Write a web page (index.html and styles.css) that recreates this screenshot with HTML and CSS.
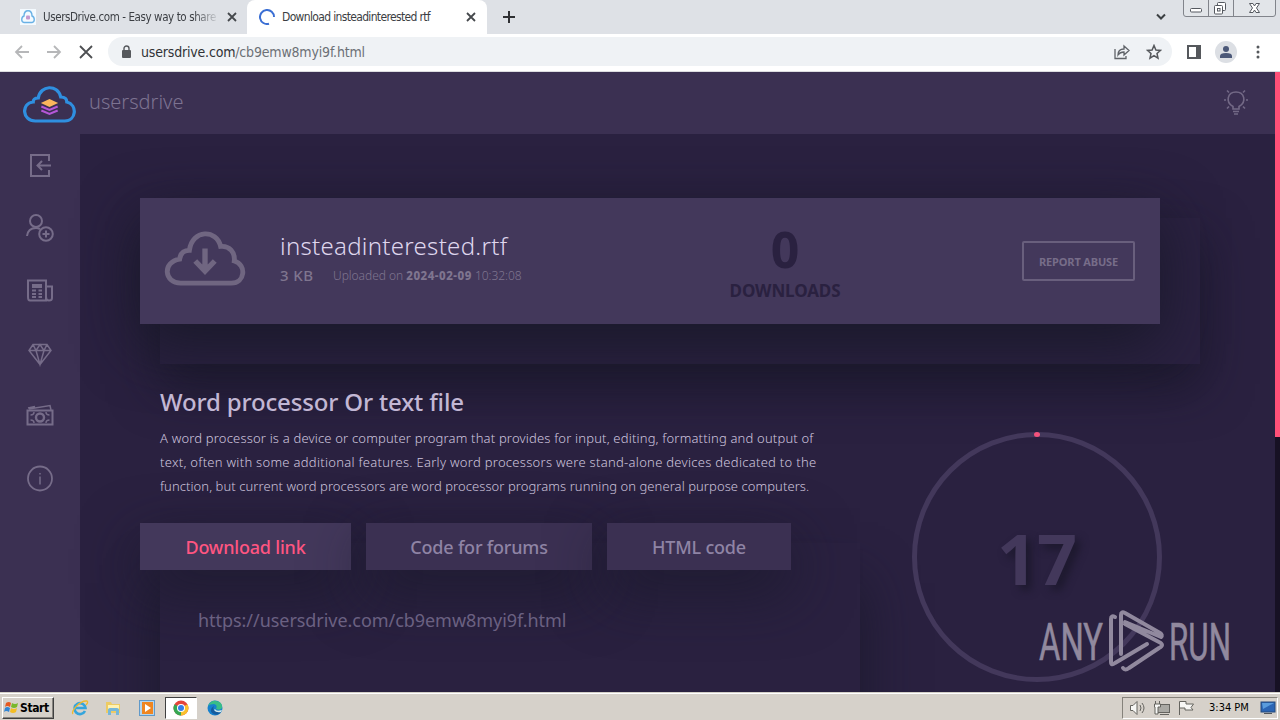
FILE: index.html
```html
<!DOCTYPE html>
<html lang="en">
<head>
    <meta charset="UTF-8">
    <meta name="viewport" content="width=device-width, initial-scale=1.0">
    <title>Download insteadinterested rtf</title>
    <link rel="stylesheet" href="styles.css">
</head>
<body>

<div class="tabstrip">
    <div class="tab">
        <svg class="favicon" width="16" height="16" viewBox="0 0 16 16"><rect width="16" height="16" fill="#f4faff"/><path d="M4 13.500C1 13 1 8 4 7C4 0 12 0 12 7C15 8 15 13 12 13.500Z" fill="none" stroke="#69b1e5" stroke-width="1.400"/><rect x="6" y="6.500" width="4" height="4" rx="1" fill="#c69ad0"/></svg>
        <span class="tab-title faded">UsersDrive.com - Easy way to share</span>
        <svg class="close" width="10" height="10" viewBox="0 0 10 10"><path d="M1 1L9 9M9 1L1 9"/></svg>
    </div>
    <div class="tab active">
        <svg class="favicon" width="16" height="16" viewBox="0 0 16 16"><path d="M10 14.700A7 7 0 1 1 15 8" fill="none" stroke="#3b6fd4" stroke-width="2"/></svg>
        <span class="tab-title">Download insteadinterested rtf</span>
        <svg class="close" width="10" height="10" viewBox="0 0 10 10"><path d="M1 1L9 9M9 1L1 9"/></svg>
    </div>
    <svg class="new-tab" width="12" height="12" viewBox="0 0 12 12"><path d="M6 0V12M0 6H12" stroke="#2f3033" stroke-width="2"/></svg>
    <svg class="tab-search" width="10" height="8" viewBox="0 0 10 8"><path d="M1 1.500L5 5.500L9 1.500" fill="none" stroke="#3c4043" stroke-width="2"/></svg>
    <svg class="window-buttons" width="93" height="18" viewBox="0 0 93 18">
        <path d="M.5 0V14Q.5 16.500 3 16.500H90Q92.500 16.500 92.500 14V0M25.500 0V16M50.500 0V16" fill="#e2e5e9" stroke="#81848b"/>
        <g fill="#fff" stroke="#555960"><rect x="7.500" y="8.500" width="11" height="3.500" rx="1"/><rect x="34.500" y="2.500" width="8" height="8" rx="1"/><rect x="31.500" y="5.500" width="8" height="8.500" rx="1"/><rect x="34.500" y="8.500" width="2.500" height="2.500"/><path d="M66.500 3.500H70L71.500 6L73 3.500H76.500L73.500 8L76.500 12.500H73L71.500 10L70 12.500H66.500L69.500 8Z"/></g>
    </svg>
</div>

<div class="toolbar">
    <svg class="nav" width="92" height="16" viewBox="0 0 92 16" fill="none" stroke-width="1.800">
        <path d="M15 8H2M8 2L2 8L8 14M33 8H46M40 2L46 8L40 14" stroke="#b6b7b9"/>
        <path d="M66 2L78 14M78 2L66 14" stroke="#4d4f52"/>
    </svg>
    <div class="address">
        <svg width="10" height="14" viewBox="0 0 10 14"><rect y="5" width="9" height="8" rx="1" fill="#56595d"/><path d="M2 6V3.500A2.500 2.500 0 0 1 7 3.500V6" fill="none" stroke="#56595d" stroke-width="1.400"/></svg>
        <span class="url">usersdrive.com<span>/cb9emw8myi9f.html</span></span>
        <svg class="share" width="16" height="16" viewBox="0 0 16 16" fill="none" stroke="#5f6368" stroke-width="1.300"><path d="M1 5V14.500H12V12"/><path d="M4 11Q4 5 10 5V2L15 6.500L10 11V8Q6 8 4 11Z"/></svg>
        <svg class="star" width="16" height="16" viewBox="0 0 16 16"><path d="M8 1.500L9.900 6L14.500 6.400L11 9.500L12 14.200L8 11.700L4 14.200L5 9.500L1.500 6.400L6.100 6Z" fill="none" stroke="#55585c" stroke-width="1.500"/></svg>
    </div>
    <svg class="side-panel" width="14" height="14" viewBox="0 0 14 14"><rect x="1" y="1" width="12" height="12" fill="none" stroke="#55585c" stroke-width="2"/><rect x="9" width="5" height="14" fill="#55585c"/></svg>
    <svg class="profile" width="22" height="22" viewBox="0 0 22 22"><circle cx="11" cy="11" r="11" fill="#dcdfe4"/><circle cx="11" cy="8" r="3" fill="#4b5878"/><path d="M5 17V15Q5 12 11 12Q17 12 17 15V17Z" fill="#4b5878"/></svg>
    <svg class="menu" width="4" height="14" viewBox="0 0 4 14" fill="#55585c"><circle cx="2" cy="2" r="1.500"/><circle cx="2" cy="7" r="1.500"/><circle cx="2" cy="12" r="1.500"/></svg>
</div>

<div class="viewport">
    <div class="site">
        <header class="header">
            <svg class="logo" width="53" height="37" viewBox="0 0 52 37" preserveAspectRatio="none">
                <path d="M12 35C-1 35-2 17 10 16C10 13 12 12 15 12C17-1 34-2 37 11C40 11 43 12 43 16C54 19 52 35 41 35Z" fill="none" stroke="#2f8fe0" stroke-width="3.200"/>
                <path d="M17.500 17L26 13L34.500 17L26 21Z" fill="#fbb65c"/>
                <path d="M18 20.500L26 24L34 20.500M18 24.500L26 28L34 24.500" fill="none" stroke="#b557d8" stroke-width="2"/>
            </svg>
            <span class="brand">usersdrive</span>
            <svg class="bulb" width="24" height="26" viewBox="0 0 24 26" fill="none" stroke="#736986" stroke-width="1.600"><path d="M9 20V17.500C1 13 3.500 3 12 3C20.500 3 23 13 15 17.500V20ZM9 22.500H15M10 25H14"/><path d="M3 1.500L5 3.500M21 1.500L19 3.500M0 11H2M22 11H24M3 19.500L5 17.500M21 19.500L19 17.500"/></svg>
        </header>
        <div class="body">
            <nav class="sidebar">
                <a><svg viewBox="0 0 28 28"><path d="M23 10V4H5V25H23V19M25 14.500H12M16 10L11.500 14.500L16 19"/></svg></a>
                <a><svg viewBox="0 0 28 28"><circle cx="10" cy="7" r="6"/><path d="M1 22Q2 14 10 14Q12 14 14 15"/><circle cx="20" cy="20" r="6.800"/><path d="M20 16.500V23.500M16.500 20H23.500"/></svg></a>
                <a><svg viewBox="0 0 28 28"><path d="M2 4.500H20V24.500H4Q2 24.500 2 21ZM20 10.500H26V22Q26 24.500 23 24.500Q20 24.500 20 21"/><path d="M6 10H16" stroke-width="4"/><path d="M6 14.500H10M12.500 14.500H16M6 18H10M12.500 18H16M6 21H10M12.500 21H16"/></svg></a>
                <a><svg viewBox="0 0 28 28" class="thin"><path d="M7 5.500H21L25 11.500L14 25.500L3 11.500ZM3 11.500H25M7 5.500L10 11.500L14 25.500L18 11.500L21 5.500M10 11.500L14 5.500L18 11.500"/></svg></a>
                <a><svg viewBox="0 0 28 28" class="thin"><path d="M1.500 8.500H26.500V22.500H1.500Z" stroke-width="2"/><path d="M3 7L24 3.500L25 8M2 6L9 4.500M4.500 13Q8 13 8 10M20 10Q20 13 23.500 13M4.500 18Q8 18 8 21M20 21Q20 18 23.500 18"/><circle cx="14" cy="15.500" r="4" stroke-width="2.400"/></svg></a>
                <a><svg viewBox="0 0 28 28" class="thin"><circle cx="14" cy="14.500" r="12" stroke-width="1.800"/><path d="M14 12.500V20.500M14 9V10.500"/></svg></a>
            </nav>
            <main class="content">
                <section class="panel">
                    <div class="file-card">
                        <svg class="cloud" width="82" height="58" viewBox="-1 -1 84 60" preserveAspectRatio="none" fill="none" stroke="#706681">
                            <path d="M16 53C-1 53-3 31 15 28C16 21 20 19 25 19C28-3 53-3 57 15C66 14 72 21 71 30C84 34 82 53 68 53Z" stroke-width="5"/>
                            <path d="M41 17V39M31 30L41 40.500L51 30" stroke-width="5.500"/>
                        </svg>
                        <div class="file-info">
                            <h1>insteadinterested.rtf</h1>
                            <p><span class="size">3 KB</span><span class="uploaded">Uploaded on <b>2024-02-09</b> 10:32:08</span></p>
                        </div>
                        <div class="downloads">
                            <strong>0</strong>
                            <span>DOWNLOADS</span>
                        </div>
                        <button class="report">REPORT ABUSE</button>
                    </div>
                </section>
                <div class="columns">
                    <div class="details">
                        <h2>Word processor Or text file</h2>
                        <p><span class="l1">A word processor is a device or computer program that provides for input, editing, formatting and output of</span><br><span class="l2">text, often with some additional features. Early word processors were stand-alone devices dedicated to the</span><br><span class="l3">function, but current word processors are word processor programs running on general purpose computers.</span></p>
                        <div class="link-box">
                            <div class="link-tabs">
                                <button class="current">Download link</button>
                                <button class="forums">Code for forums</button>
                                <button class="html-code">HTML code</button>
                            </div>
                            <div class="link">https://usersdrive.com/cb9emw8myi9f.html</div>
                        </div>
                    </div>
                    <div class="countdown">17</div>
                </div>
            </main>
        </div>
    </div>
    <div class="scrollbar"></div>
    <svg class="watermark" width="200" height="72" viewBox="0 0 200 72">
        <text x="2" y="51" textLength="64" lengthAdjust="spacingAndGlyphs">ANY</text>
        <text x="132" y="51" textLength="62" lengthAdjust="spacingAndGlyphs">RUN</text>
        <path d="M78 8Q74 6 74 10V53Q74 57 78 54L110 35M84 45V6Q84 2 88 4L123 24Q126 26 124 28L88 13M86 59Q88 62 92 59L122 39Q128 36 122 33L88 15"/>
    </svg>
</div>

<footer class="taskbar">
    <button class="start"><svg width="17" height="16" viewBox="0 0 17 16"><path d="M3 3Q6 1 8 3L7 7Q4 5 2 7Z" fill="#e65a22"/><path d="M9 3Q12 5 15 3L14 7Q11 9 8 7Z" fill="#78b82c"/><path d="M2 8Q4 6 7 8L6 12Q3 10 1 12Z" fill="#3285d4"/><path d="M8 8Q11 10 14 8L13 12Q10 14 7 12Z" fill="#f4bd24"/></svg>Start</button>
    <svg class="ie" width="18" height="18" viewBox="0 0 18 18"><path d="M14 12A5.500 5.500 0 1 1 14.500 9H5" fill="none" stroke="#35a5dc" stroke-width="2.600"/><path d="M2 15C-1 13 9 1 16 2C17.500 3 16 5 15 6" fill="none" stroke="#efb92d" stroke-width="1.400"/></svg>
    <svg class="folder" width="16" height="16" viewBox="0 0 16 16"><path d="M1 2H6L7 4H15V13H1Z" fill="#edcb64"/><path d="M3 5H14V9H3Z" fill="#fff2b2"/><path d="M3 15V10Q3 8 5 8H12Q14 8 14 10V15H11V11H6V15Z" fill="#76b7d9"/></svg>
    <svg class="player" width="16" height="16" viewBox="0 0 16 16"><rect x=".5" y=".5" width="15" height="15" fill="#b4d5ed" stroke="#6099c9"/><rect x="3" y="2" width="11" height="12" fill="#ef8621"/><path d="M6 4L12 8L6 12Z" fill="#fff"/></svg>
    <div class="task-active"><svg width="16" height="16" viewBox="0 0 16 16"><circle cx="8" cy="8" r="7.500" fill="#e4443a"/><path d="M8 8L1.500 4.200A7.500 7.500 0 0 0 8 15.500Z" fill="#35a853"/><path d="M8 8L14.500 4.300A7.500 7.500 0 0 1 8 15.500Z" fill="#fac12d"/><circle cx="8" cy="8" r="4" fill="#fff"/><circle cx="8" cy="8" r="3" fill="#347de8"/></svg></div>
    <svg class="edge" width="16" height="16" viewBox="0 0 16 16"><circle cx="8" cy="8" r="7.500" fill="#1681ce"/><path d="M1 6Q4 0 9 1Q16 2 15 8Q13 11 9 9Q11 5 7 4Q3 4 1 6Z" fill="#39be87"/><path d="M7 6Q4 12 14 12Q10 17 5 13Q2 9 7 6Z" fill="#155b9e"/><path d="M8 9Q9 12 15 10L14 12Q9 13 7 10Z" fill="#d7e9ea"/></svg>
    <div class="tray">
        <svg width="66" height="16" viewBox="0 0 66 16" fill="#f7f7f5" stroke="#65645f">
            <path d="M1.500 5.500H4L8 1.500V14.500L4 10.500H1.500Z"/><path d="M11 5Q13 8 11 11M13 3Q17 8 13 13" fill="none"/>
            <rect x="28.500" y="4.500" width="12" height="8" fill="#aaa9a4"/><path d="M31 14.500H40M26.500 1V4M30.500 1V4M25.500 4H31.500V7H29V14H26V7H25.500Z"/>
            <path d="M50.500 15V1.500H57V4H64.500L62 7.500L64 10H56V8H50.500"/>
        </svg>
        <span>3:34 PM</span>
        <svg width="16" height="14" viewBox="0 0 16 14"><rect x="1" y="1" width="14" height="10" fill="#2b65b4" stroke="#244b7d"/><path d="M2 2H14L3 8Z" fill="#5a9cdc"/><path d="M4 12.500H12" stroke="#53575c"/></svg>
    </div>
</footer>

</body>
</html>
```
FILE: styles.css
```css
* {
    box-sizing: border-box;
}
body {
    margin: 0;
    width: 1280px;
    height: 720px;
    overflow: hidden;
    display: flex;
    flex-direction: column;
    font-family: "Noto Sans", sans-serif;
}
h1, h2, p {
    margin: 0;
    white-space: nowrap;
}
button {
    font-family: inherit;
    border: 0;
    padding: 0;
    white-space: nowrap;
}
svg {
    flex-shrink: 0;
    display: block;
}

/* browser */
.tabstrip {
    display: flex;
    align-items: center;
    height: 34px;
    background: #dee1e6;
    font: 12px "DejaVu Sans Condensed", sans-serif;
    color: #3b3e43;
}
.tab {
    display: flex;
    align-items: center;
    width: 247px;
    height: 34px;
    padding: 0 10px 0 20px;
}
.tab.active {
    width: 240px;
    padding: 0 11px 0 12px;
    background: #fff;
    border-radius: 8px 8px 0 0;
}
.tab-title {
    width: 177px;
    margin: 0 auto 0 7px;
    white-space: nowrap;
    letter-spacing: -0.66px;
}
.faded {
    font-size: 11.5px;
    letter-spacing: -0.4px;
    -webkit-mask-image: linear-gradient(90deg, #000 85%, transparent);
    mask-image: linear-gradient(90deg, #000 85%, transparent);
}
.close {
    fill: none;
    stroke: #45484c;
    stroke-width: 1.8;
}
.new-tab {
    margin-left: 16px;
}
.tab-search {
    margin-left: auto;
}
.window-buttons {
    align-self: flex-start;
    margin: 0 4px 0 17px;
}
.toolbar {
    display: flex;
    align-items: center;
    height: 38px;
    padding: 0 20px 2px 14px;
    background: #fff;
    border-bottom: 1px solid #dcdce0;
}
.address {
    display: flex;
    align-items: center;
    width: 1064px;
    height: 29px;
    margin-left: 2px;
    padding: 0 10px 0 14px;
    border-radius: 15px;
    background: #eff2f5;
}
.url {
    margin: 0 auto 0 9px;
    font: 14px "DejaVu Sans Condensed", sans-serif;
    letter-spacing: -0.18px;
    color: #303236;
}
.url span {
    color: #6c7075;
}
.share {
    margin-right: 16px;
}
.side-panel {
    margin-left: 15px;
}
.profile {
    margin-left: 14px;
}
.menu {
    margin-left: auto;
}

/* site */
.viewport {
    position: relative;
    display: flex;
    height: 620px;
    overflow: hidden;
    background: #2a2140;
}
.site {
    width: 1275px;
}
.scrollbar {
    width: 5px;
    background: linear-gradient(#ff5078 365px, #171124 365px);
}
.header {
    display: flex;
    align-items: center;
    height: 62px;
    padding: 0 27px 0 23px;
    background: #3b3052;
}
.logo {
    margin-top: 3px;
}
.brand {
    margin-left: 13px;
    margin-top: -3px;
    font-size: 20px;
    font-weight: 300;
    color: #7d7391;
}
.bulb {
    margin: -3px 0 0 auto;
}
.body {
    display: flex;
    height: 558px;
}
.sidebar {
    width: 80px;
    background: #3b3052;
    flex-shrink: 0;
}
.sidebar a {
    display: flex;
    align-items: center;
    justify-content: center;
    height: 62.6px;
}
.sidebar svg {
    width: 28px;
    height: 28px;
    fill: none;
    stroke: #766c89;
    stroke-width: 2;
}
.sidebar .thin {
    stroke-width: 1.5;
}
.content {
    width: 1195px;
    padding: 84px 0 0 80px;
}
.panel {
    display: flex;
    width: 1040px;
    height: 146px;
    background: #2a2140;
    box-shadow: 0 20px 50px rgba(20, 20, 34, 0.65);
}
.file-card {
    display: flex;
    align-items: center;
    flex-shrink: 0;
    width: 1020px;
    height: 126px;
    margin: -20px 0 0 -20px;
    padding: 0 25px 0 24px;
    background: #43385b;
    box-shadow: 0 20px 60px rgba(24, 24, 40, 0.95);
}
.cloud {
    margin-top: -3px;
}
.file-info {
    width: 400px;
    margin-left: 34px;
    margin-top: -6px;
}
.file-info h1 {
    font-size: 24px;
    line-height: 34px;
    font-weight: 300;
    letter-spacing: 0.29px;
    color: #dfd6ee;
}
.file-info p {
    display: flex;
    align-items: center;
    height: 25px;
    color: #7f758f;
}
.size {
    width: 53px;
    font-size: 15px;
    font-weight: 500;
    letter-spacing: 0.4px;
}
.uploaded {
    font-size: 12px;
    font-weight: 300;
    letter-spacing: -0.03px;
}
.uploaded b {
    font-size: 11.5px;
    font-weight: 800;
    letter-spacing: 0.5px;
}
.downloads {
    display: flex;
    flex-direction: column;
    align-items: center;
    width: 210px;
    padding-top: 7px;
    color: #2a2140;
}
.downloads strong {
    font-size: 50px;
    line-height: 52px;
}
.downloads span {
    font-size: 17px;
    line-height: 31px;
    font-weight: 700;
    letter-spacing: -0.1px;
}
.report {
    width: 113px;
    height: 40px;
    margin-left: auto;
    border: 2px solid #695f7d;
    border-radius: 2px;
    background: transparent;
    color: #776d89;
    font-size: 11px;
    font-weight: 700;
    letter-spacing: -0.16px;
}
.columns {
    display: flex;
    padding-top: 21px;
}
.details {
    width: 700px;
    color: #c2b7d4;
}
.details h2 {
    font-size: 24px;
    line-height: 34px;
    font-weight: 500;
    letter-spacing: -0.16px;
}
.details p {
    margin-top: 7px;
    font-size: 13px;
    line-height: 24px;
    font-weight: 300;
    color: #cfc5df;
}
.l1 {
    letter-spacing: 0.18px;
}
.l2 {
    letter-spacing: 0.29px;
}
.l3 {
    letter-spacing: 0.07px;
}
.link-box {
    height: 180px;
    margin-top: 45px;
    background: #2a2140;
    box-shadow: 0 40px 50px rgba(24, 24, 40, 0.8);
}
.link-tabs {
    display: flex;
    gap: 15px;
    margin-left: -20px;
}
.link-tabs button {
    width: 226px;
    height: 47px;
    margin-top: -20px;
    padding-top: 1px;
    background: #3b3052;
    box-shadow: 0 20px 60px rgba(24, 24, 40, 0.75);
    color: #8f84a5;
    font-size: 18px;
    font-weight: 500;
    letter-spacing: -0.2px;
}
.link-tabs .current {
    width: 211px;
    background: #43385b;
    color: #ff5581;
}
.link-tabs .html-code {
    width: 184px;
}
.link {
    position: relative;
    padding: 38px 0 0 38px;
    font-size: 18px;
    line-height: 25px;
    letter-spacing: -0.05px;
    color: #6b6182;
}
.countdown {
    display: flex;
    align-items: center;
    justify-content: center;
    position: relative;
    width: 250px;
    height: 250px;
    margin: 47px 0 0 52px;
    padding-top: 1px;
    border: 5px solid #43385b;
    border-radius: 50%;
    color: #43385b;
    font-size: 70px;
    font-weight: 700;
    text-shadow: 5px 5px 8px #1c182c;
}
.countdown::before {
    content: "";
    position: absolute;
    top: -5px;
    left: 117px;
    width: 6px;
    height: 5px;
    border-radius: 50%;
    background: #f4527c;
}
.watermark {
    position: absolute;
    left: 1037px;
    top: 537px;
    fill: none;
    stroke: #91899e;
    stroke-width: 4;
    stroke-linecap: round;
    stroke-linejoin: round;
}
.watermark text {
    fill: #91899e;
    stroke: #91899e;
    stroke-width: 0.6;
    font-family: Roboto, sans-serif;
    font-size: 52px;
    font-weight: 400;
}

/* taskbar */
.taskbar {
    display: flex;
    align-items: center;
    height: 28px;
    padding: 2px 2px 0 2px;
    background: #d6d1ca;
    border-top: 1px solid #d4d0c8;
    box-shadow: inset 0 1px #fff;
}
.start {
    display: flex;
    align-items: center;
    width: 52px;
    height: 22px;
    background: #d6d1ca;
    border: 1px solid;
    border-color: #fff #404040 #404040 #fff;
    box-shadow: inset -1px -1px #888580;
    color: #000;
    font: bold 12px "DejaVu Sans Condensed", sans-serif;
    letter-spacing: -0.4px;
}
.ie {
    margin-left: 17px;
}
.folder {
    margin-left: 16px;
}
.player {
    margin-left: 18px;
}
.task-active {
    display: flex;
    align-items: center;
    justify-content: center;
    width: 32px;
    height: 22px;
    margin-left: 10px;
    background: #fff;
    border: 1px solid;
    border-color: #404040 #fff #fff #404040;
}
.edge {
    margin-left: 10px;
}
.tray {
    display: flex;
    align-items: center;
    width: 156px;
    height: 22px;
    margin-left: auto;
    padding: 0 1px 0 6px;
    border: 1px solid;
    border-color: #85827b #fff #fff #85827b;
    font: 11px "DejaVu Sans Condensed", sans-serif;
}
.tray span {
    margin: 0 auto 0 14px;
    white-space: nowrap;
}
```
